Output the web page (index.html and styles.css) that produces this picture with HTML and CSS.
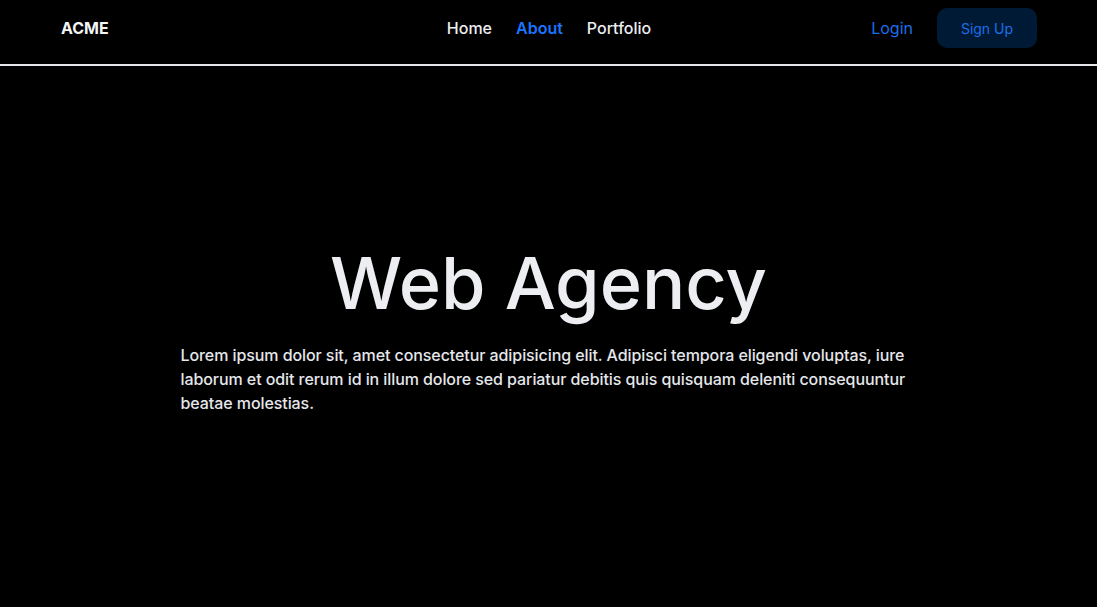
FILE: index.html
```html
<!DOCTYPE html>
<html lang="en">
<head>
<meta charset="utf-8">
<title>ACME</title>
<link rel="stylesheet" href="styles.css">
</head>
<body>
<div class="page">
  <header class="header">
    <div class="brand">ACME</div>
    <nav class="nav">
      <a class="nav-link" href="#">Home</a>
      <a class="nav-link active" href="#">About</a>
      <a class="nav-link" href="#">Portfolio</a>
    </nav>
    <div class="actions">
      <a class="login" href="#">Login</a>
      <a class="signup" href="#">Sign Up</a>
    </div>
  </header>
  <main class="hero">
    <div class="hero-inner">
      <h1 class="title">Web Agency</h1>
      <p class="lead">Lorem ipsum dolor sit, amet consectetur adipisicing elit. Adipisci tempora eligendi voluptas, iure laborum et odit rerum id in illum dolore sed pariatur debitis quis quisquam deleniti consequuntur beatae molestias.</p>
    </div>
  </main>
</div>
</body>
</html>
```

FILE: styles.css
```css
* { box-sizing: border-box; }
html, body { margin: 0; padding: 0; height: 100%; }
body {
  background: #000;
  color: #e5e7eb;
  font-family: Inter, "Noto Sans", sans-serif;
}
a { text-decoration: none; }
.page {
  min-height: 100vh;
  display: flex;
  flex-direction: column;
}
.header {
  height: 66px;
  border-bottom: 2px solid #e5e7eb;
  display: grid;
  grid-template-columns: 1fr auto 1fr;
  align-items: start;
  padding: 8px 60px 0 61px;
}
.brand, .nav, .actions {
  height: 40px;
  display: flex;
  align-items: center;
}
.brand {
  font-weight: 700;
  font-size: 16px;
  color: #f3f4f6;
}
.nav {
  gap: 24px;
}
.nav-link {
  color: #eceef1;
  font-size: 16px;
  font-weight: 450;
}
.nav-link.active {
  color: #1b74ff;
  font-weight: 600;
}
.actions {
  justify-self: end;
  gap: 24px;
}
.login {
  color: #1c6ee8;
  font-size: 16px;
}
.signup {
  width: 100px;
  height: 40px;
  border-radius: 10px;
  background: #001a36;
  color: #1c6ee8;
  font-size: 14px;
  display: flex;
  align-items: center;
  justify-content: center;
}
.hero {
  flex: 1;
  display: flex;
  align-items: center;
  justify-content: center;
  padding-bottom: 18px;
}
.hero-inner {
  max-width: 768px;
  width: 100%;
  padding: 0 16px;
  text-align: center;
}
.title {
  margin: 0 0 16px;
  font-size: 72px;
  font-weight: 480;
  line-height: 1.2;
  color: #eceef1;
}
.lead {
  margin: 0;
  text-align: left;
  font-size: 16px;
  line-height: 24px;
  font-weight: 500;
  letter-spacing: -0.08px;
  color: #e5e7eb;
}
```
